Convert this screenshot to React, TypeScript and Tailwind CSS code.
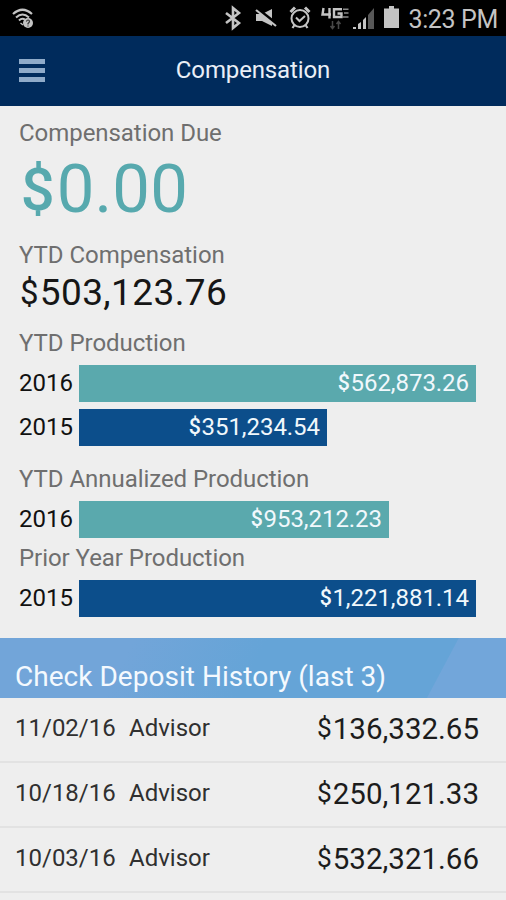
import clsx from "clsx";

type BarRow = { year: string; amount: string; width: number; tone: "teal" | "navy" };

const YTD_PRODUCTION: BarRow[] = [
  { year: "2016", amount: "562,873.26", width: 397, tone: "teal" },
  { year: "2015", amount: "351,234.54", width: 248, tone: "navy" },
];

const YTD_ANNUALIZED: BarRow = { year: "2016", amount: "953,212.23", width: 310, tone: "teal" };
const PRIOR_YEAR: BarRow = { year: "2015", amount: "1,221,881.14", width: 397, tone: "navy" };

const DEPOSITS = [
  { date: "11/02/16", type: "Advisor", amount: "136,332.65" },
  { date: "10/18/16", type: "Advisor", amount: "250,121.33" },
  { date: "10/03/16", type: "Advisor", amount: "532,321.66" },
];

function StatusBar() {
  return (
    <div className="flex h-9 items-center justify-between bg-black pl-3 pr-2 text-[#c4c4c4]">
      <svg width="22" height="22" viewBox="0 0 22 22" fill="none" stroke="currentColor">
        <path d="M1 7Q10.500 -1.500 20 7" strokeWidth="2.200" />
        <path d="M4 10.500Q10.500 4.500 17 10.500" strokeWidth="2" />
        <path d="M7 13.500Q10 10.500 13 12.500" strokeWidth="2" />
        <path d="M8.500 16L11 18" strokeWidth="1.500" />
        <circle cx="16" cy="16" r="5" fill="currentColor" stroke="none" />
        <path d="M14.300 14.500Q16 11.800 17.500 14Q17.500 15.500 16 16.500V17.500M16 18.500V19.500" stroke="#333" strokeWidth="1.200" />
      </svg>
      <div className="flex items-center">
        <svg width="150" height="26" viewBox="0 0 150 26" fill="none" stroke="currentColor">
          {/* bluetooth */}
          <path d="M1 8L14 18L8 23V3L14 8L1 18" strokeWidth="2.600" />
          {/* muted speaker */}
          <path d="M31 9H37L47 4V21L37 16H31Z" fill="currentColor" stroke="none" />
          <path d="M30 2L53 20" stroke="#000" strokeWidth="3" />
          <path d="M31 5L51 21" strokeWidth="2.200" />
          {/* alarm */}
          <circle cx="75" cy="13.500" r="8.500" strokeWidth="2" />
          <path d="M65.500 7L70 2.500M84.500 7L80 2.500" strokeWidth="3" />
          <path d="M71 12.500L74.500 16L80 11" strokeWidth="2" />
          <path d="M69.500 20L67.500 23M80.500 20L82.500 23" strokeWidth="2.200" />
          {/* 4G LTE */}
          <path d="M98.500 3L97.500 9.500H106M104.500 3V13.500" strokeWidth="2.400" />
          <path d="M117 4.200H109V12H116.500V8.500H112.500" strokeWidth="2.400" />
          <path d="M118 4.200H123.500M119 8H123.500M118 12H123.500" stroke="#8a8a8a" strokeWidth="1.600" />
          <g stroke="#484848" strokeWidth="1.500">
            <path d="M107.500 16V23M105.500 21L107.500 23.500L109.500 21" />
            <path d="M113.500 24V17M111.500 19L113.500 16.500L115.500 19" />
          </g>
          {/* signal */}
          <g fill="currentColor" stroke="none">
            <path d="M128 22H131V24H128Z" />
            <path d="M133 19L136 17V24H133Z" />
            <path d="M138 15L141 12V24H138Z" />
            <path d="M143 10L149 3V24H143Z" fill="#585858" />
          </g>
        </svg>
        <svg width="15" height="24" viewBox="0 0 15 24" className="ml-[9px] mr-[9px]" fill="currentColor">
          <path d="M5 0H10V2.500H15V22H0V2.500H5Z" />
        </svg>
        <span className="pt-[3px] text-[25px] leading-[33px] tracking-[-0.35px]">3:23 PM</span>
      </div>
    </div>
  );
}

function TitleBar() {
  return (
    <div className="relative flex h-[70px] items-center justify-center bg-[#002b5c]">
      <div className="absolute left-[19px] top-[23px] flex flex-col gap-1">
        <div className="h-[5px] w-[26px] bg-[#8fabc9]" />
        <div className="h-[5px] w-[26px] bg-[#8fabc9]" />
        <div className="h-[5px] w-[26px] bg-[#8fabc9]" />
      </div>
      <h1 className="pb-0.5 text-[24px] leading-[68px] tracking-[-0.13px] text-[#e9eff7]">Compensation</h1>
    </div>
  );
}

function Label({ children, className }: { children: string; className?: string }) {
  return (
    <p className={clsx("text-[24px] leading-[27px] tracking-[-0.05px] text-[#6f6f6f]", className)}>
      {children}
    </p>
  );
}

// The dollar sign is shorter than the digits but keeps their advance.
function Money({ value, strong }: { value: string; strong?: boolean }) {
  return (
    <>
      <span className="inline-block w-[0.562em] text-center align-[0.035em] leading-none">
        <span className={clsx("text-[0.89em]", strong && "font-medium")}>$</span>
      </span>
      {value}
    </>
  );
}

function Bar({ row }: { row: BarRow }) {
  return (
    <div className="flex h-[37px] items-center">
      <span className="w-[60px] shrink-0 text-[24px] leading-[37px] text-[#111]">{row.year}</span>
      <div
        className={clsx(
          "flex h-full items-center justify-end pr-[7px]",
          row.tone === "teal" ? "bg-[#5aa9ad]" : "bg-[#0c4e8b]",
        )}
        style={{ width: row.width }}
      >
        <span className="text-[24px] leading-[37px] tracking-[-0.05px] text-[#f1f8fc]">
          <Money value={row.amount} strong />
        </span>
      </div>
    </div>
  );
}

export default function App() {
  return (
    <div className="flex h-[900px] w-[506px] flex-col overflow-hidden bg-[#eeeeee] font-['Roboto',sans-serif]">
      <StatusBar />
      <TitleBar />

      <div className="flex h-[532px] shrink-0 flex-col pl-[19px] pt-[14px]">
        <Label>Compensation Due</Label>
        <p className="mt-[6px] h-[72px] text-[67px] leading-[72px] tracking-[0.2px] text-[#57a9ae]">
          <Money value="0.00" strong />
        </p>
        <Label className="mt-[17px]">YTD Compensation</Label>
        <p className="mt-px h-[46px] text-[37px] leading-[46px] tracking-[0.4px] text-[#161616]">
          <Money value="503,123.76" />
        </p>
        <Label className="mt-[14px]">YTD Production</Label>
        <div className="mt-[8px] flex flex-col gap-[7px]">
          {YTD_PRODUCTION.map((row) => (
            <Bar key={row.year} row={row} />
          ))}
        </div>
        <Label className="mb-[8px] mt-[20px]">YTD Annualized Production</Label>
        <Bar row={YTD_ANNUALIZED} />
        <Label className="mb-[8px] mt-[7px]">Prior Year Production</Label>
        <Bar row={PRIOR_YEAR} />
      </div>

      <div className="flex h-[60px] shrink-0 items-center bg-[linear-gradient(118deg,#72a5d9_0%,#72a5d9_25%,#65a4d7_50%,#65a4d7_85.2%,#72a6da_85.4%)] pl-[15px] pt-4">
        <h2 className="pt-px text-[28px] leading-[43px] tracking-[0.03px] text-[#f4f9fe]">Check Deposit History (last 3)</h2>
      </div>

      <ul className="shrink-0">
        {DEPOSITS.map((d) => (
          <li
            key={d.date}
            className="flex h-[65px] items-center border-b-2 border-[#e2e2e2] pl-[15px] pr-[27px] text-[#303030]"
          >
            <span className="w-[114px] pb-[3px] text-[24px] leading-9">{d.date}</span>
            <span className="pb-[3px] text-[24px] leading-9">{d.type}</span>
            <span className="ml-auto pb-0.5 text-[29.5px] leading-[44px] text-[#1c1c1c]">
              <Money value={d.amount} />
            </span>
          </li>
        ))}
      </ul>
    </div>
  );
}
